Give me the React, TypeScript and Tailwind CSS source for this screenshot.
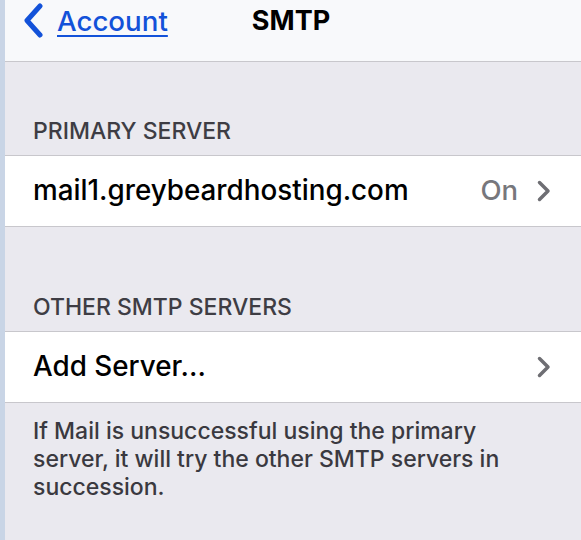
import React from 'react';

const font = { fontFamily: 'Inter, "Noto Sans", sans-serif' };

const Chevron: React.FC = () => (
  <svg width="14" height="22" viewBox="0 0 14 22" fill="none">
    <path d="M2.5 2.5 L11 11 L2.5 19.5" stroke="#6e6e73" strokeWidth="3.5" strokeLinecap="round" strokeLinejoin="round" />
  </svg>
);

const SectionHeader: React.FC<{ label: string }> = ({ label }) => (
  <div className="pl-[28px] pb-[11px] text-[23px] leading-[26px] font-medium text-[#3e3d44]">{label}</div>
);

const Row: React.FC<{ label: string; value?: string }> = ({ label, value }) => (
  <div className="h-[72px] bg-white border-y border-[#c8c7cc] flex items-center pl-[28px] pr-[30px]">
    <span className="flex-1 text-[27.8px] font-medium text-black">{label}</span>
    {value && <span className="text-[27.5px] font-medium text-[#77777c] mr-[19px]">{value}</span>}
    <Chevron />
  </div>
);

export default function App() {
  return (
    <div className="flex h-[540px] w-full overflow-hidden" style={font}>
      <div className="w-[5px] bg-[#c9d5e6]" />
      <div className="flex-1 flex flex-col bg-[#eae9ef]">
        <div className="h-[62px] bg-[#f8f9fb] border-b border-[#c8c7cc] flex items-start pt-[3px] pl-[17px]">
          <svg width="24" height="36" viewBox="0 0 24 36" fill="none">
            <path d="M18 3 L5 17.5 L18 32" stroke="#1352d9" strokeWidth="5" strokeLinecap="round" strokeLinejoin="round" />
          </svg>
          <span className="ml-[11px] text-[27.7px] leading-[36px] font-medium text-[#1352d9] underline underline-offset-[4px] decoration-2">Account</span>
          <span className="ml-[84px] text-[27px] leading-[36px] font-bold text-black">SMTP</span>
        </div>
        <div className="h-[93px] flex flex-col justify-end">
          <SectionHeader label="PRIMARY SERVER" />
        </div>
        <Row label="mail1.greybeardhosting.com" value="On" />
        <div className="h-[104px] flex flex-col justify-end">
          <SectionHeader label="OTHER SMTP SERVERS" />
        </div>
        <Row label="Add Server..." />
        <p className="pl-[28px] pr-[50px] pt-[14px] text-[23px] leading-[28px] font-medium text-[#3a3940]">
          If Mail is unsuccessful using the primary server, it will try the other SMTP servers in succession.
        </p>
      </div>
    </div>
  );
}
